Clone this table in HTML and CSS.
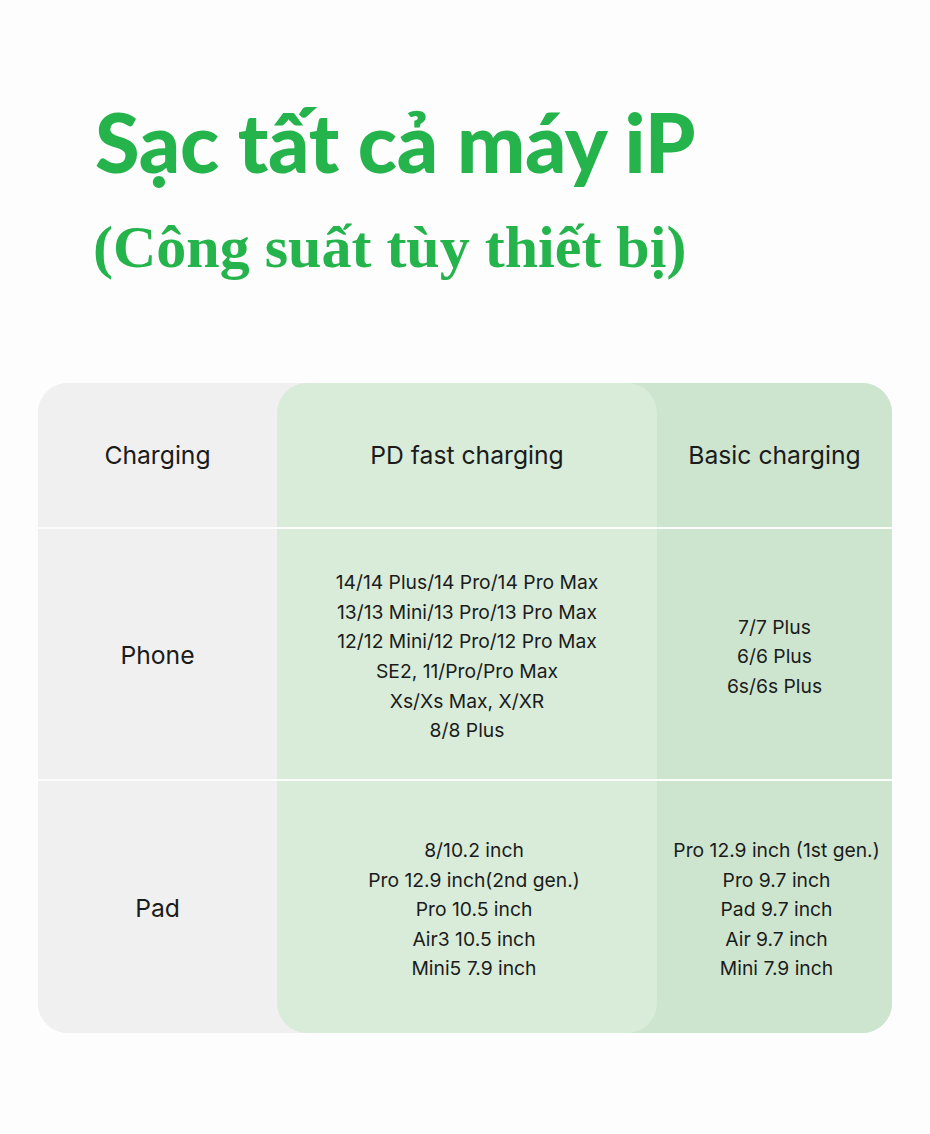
FILE: index.html
```html
<!DOCTYPE html>
<html lang="vi">
<head>
<meta charset="utf-8">
<link rel="stylesheet" href="styles.css">
</head>
<body>
<div class="page">
  <header class="title">
    <h1 class="t1">Sạc tất cả máy iP</h1>
    <h2 class="t2">(Công suất tùy thiết bị)</h2>
  </header>
  <div class="table">
    <div class="cell c1 r1">Charging</div>
    <div class="cell c2 r1">PD fast charging</div>
    <div class="cell c3 r1">Basic charging</div>

    <div class="cell c1 r2 label">Phone</div>
    <div class="cell c2 r2 list">
      <span>14/14 Plus/14 Pro/14 Pro Max</span>
      <span>13/13 Mini/13 Pro/13 Pro Max</span>
      <span>12/12 Mini/12 Pro/12 Pro Max</span>
      <span>SE2, 11/Pro/Pro Max</span>
      <span>Xs/Xs Max, X/XR</span>
      <span>8/8 Plus</span>
    </div>
    <div class="cell c3 r2 list">
      <span>7/7 Plus</span>
      <span>6/6 Plus</span>
      <span>6s/6s Plus</span>
    </div>

    <div class="cell c1 r3 label">Pad</div>
    <div class="cell c2 r3 list shift">
      <span>8/10.2 inch</span>
      <span>Pro 12.9 inch(2nd gen.)</span>
      <span>Pro 10.5 inch</span>
      <span>Air3 10.5 inch</span>
      <span>Mini5 7.9 inch</span>
    </div>
    <div class="cell c3 r3 list shift3">
      <span>Pro 12.9 inch (1st gen.)</span>
      <span>Pro 9.7 inch</span>
      <span>Pad 9.7 inch</span>
      <span>Air 9.7 inch</span>
      <span>Mini 7.9 inch</span>
    </div>
  </div>
</div>
</body>
</html>
```
FILE: styles.css
```css
* { box-sizing: border-box; }
html, body { margin: 0; padding: 0; background: #fdfdfd; }
.page { width: 930px; height: 1134px; overflow: hidden; }

.title { padding: 94px 0 0 95px; height: 383px; color: #25b34c; }
.t1 {
  margin: 0;
  font-family: Lato, "Open Sans", sans-serif;
  font-weight: 900;
  font-size: 81px;
  line-height: 96px;
  letter-spacing: -0.3px;
}
.t2 {
  margin: 17px 0 0 -2px;
  font-family: "Liberation Serif", "Times New Roman", serif;
  font-weight: 700;
  font-size: 60px;
  line-height: 80px;
}

.table {
  margin: 0 0 0 38px;
  width: 854px;
  display: grid;
  grid-template-columns: 239px 380px 235px;
  grid-template-rows: 146px 252px 252px;
  border-radius: 30px;
  overflow: hidden;
  background: linear-gradient(to right, #f0f0f0 429px, #cde5cf 429px);
  font-family: Inter, Roboto, sans-serif;
  color: #1b1b1b;
}
.cell {
  display: flex;
  flex-direction: column;
  align-items: center;
  justify-content: center;
  text-align: center;
  font-size: 24.7px;
}
.r1, .r2 { border-bottom: 2px solid #fbfdfb; }
.c1 { background: #f0f0f0; }
.c2 { background: #d8ecd9; }
.c3 { background: #cde5cf; }
.c2.r1 { border-top-left-radius: 30px; border-top-right-radius: 30px; }
.c2.r3 { border-bottom-left-radius: 30px; border-bottom-right-radius: 30px; }
.r1 { padding-top: 0; }
.label { font-size: 24.7px; padding-top: 2px; }
.list { font-size: 19.3px; line-height: 29.6px; }
.r2.list { padding-top: 6px; }
.r3.list { padding-top: 6px; }
.shift { padding-left: 14px; }
.shift3 { padding-left: 4px; }
```
